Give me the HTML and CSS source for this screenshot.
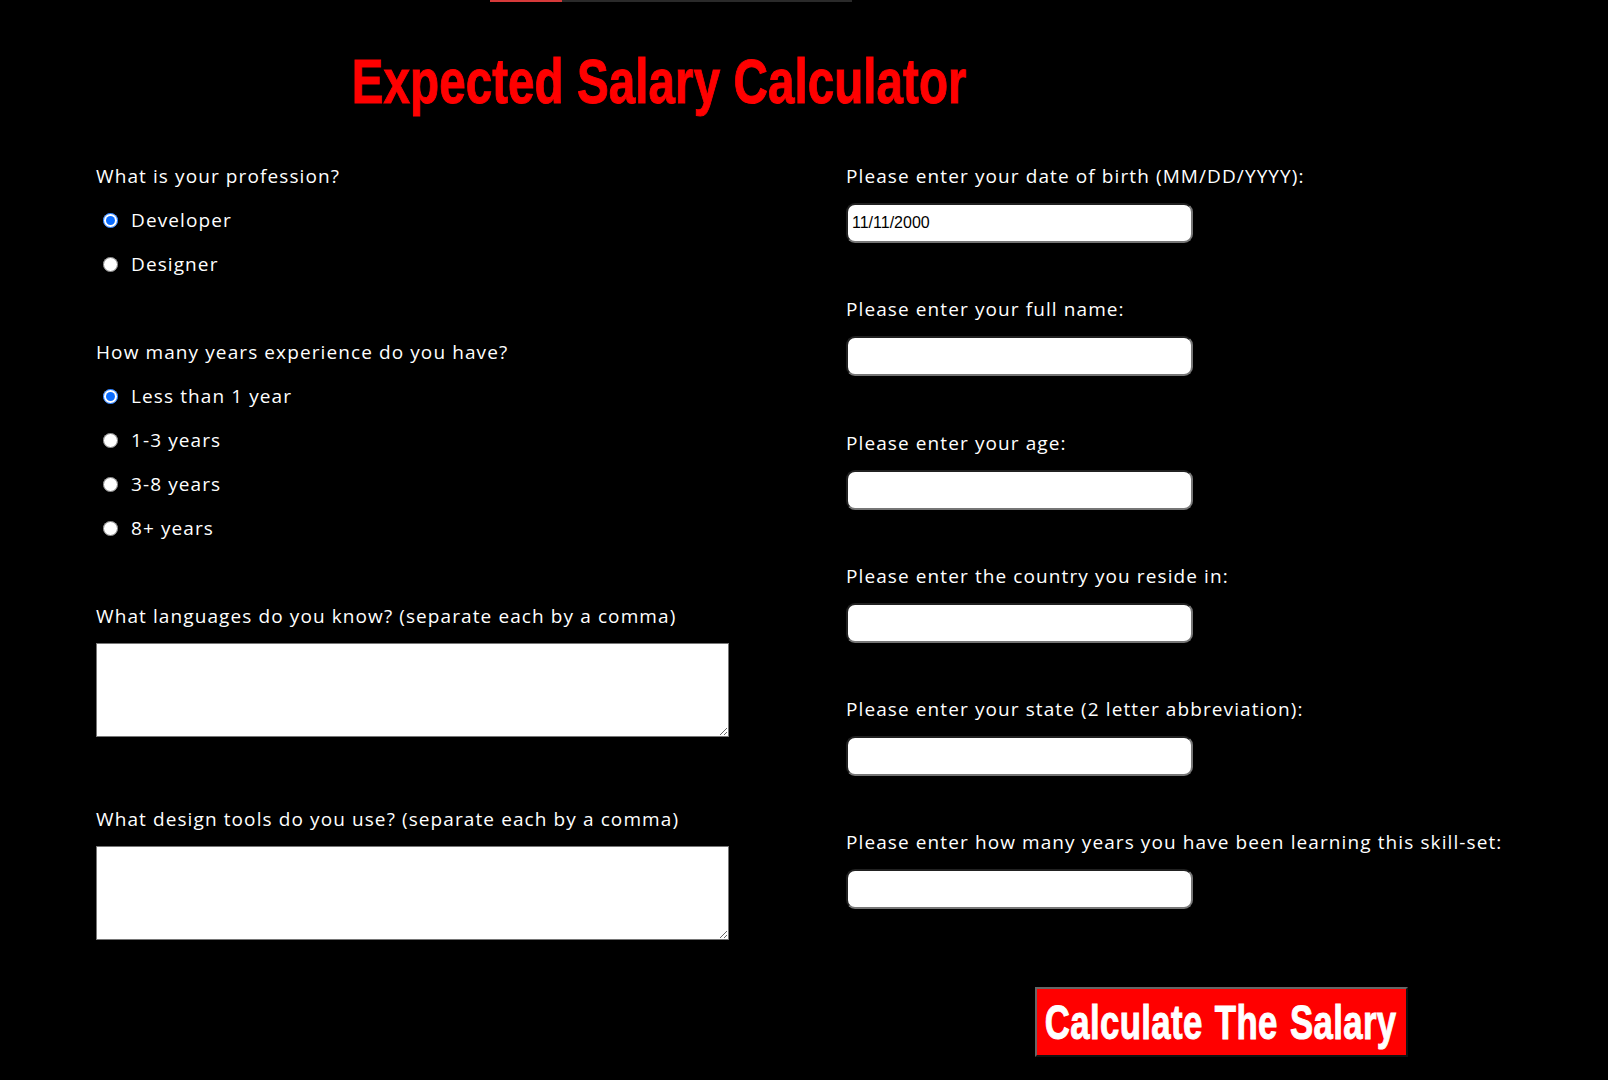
FILE: index.html
```html
<!DOCTYPE html>
<html lang="en">
<head>
<meta charset="utf-8">
<title>Expected Salary Calculator</title>
<link rel="stylesheet" href="styles.css">
</head>
<body>
<div class="progress"><div class="progress-fill"></div></div>
<header class="title-wrap">
  <h1 class="title"><span class="title-text">Expected Salary Calculator</span></h1>
</header>
<form class="form">
  <div class="col col-left">
    <div class="group radio-group">
      <span class="q">What is your profession?</span>
      <label class="opt"><input type="radio" name="prof" checked><span>Developer</span></label>
      <label class="opt"><input type="radio" name="prof"><span>Designer</span></label>
    </div>
    <div class="group radio-group">
      <span class="q">How many years experience do you have?</span>
      <label class="opt"><input type="radio" name="exp" checked><span>Less than 1 year</span></label>
      <label class="opt"><input type="radio" name="exp"><span>1-3 years</span></label>
      <label class="opt"><input type="radio" name="exp"><span>3-8 years</span></label>
      <label class="opt"><input type="radio" name="exp"><span>8+ years</span></label>
    </div>
    <div class="group text-group">
      <span class="q">What languages do you know? (separate each by a comma)</span>
      <textarea class="area"></textarea>
    </div>
    <div class="group text-group">
      <span class="q">What design tools do you use? (separate each by a comma)</span>
      <textarea class="area"></textarea>
    </div>
  </div>
  <div class="col col-right">
    <div class="field">
      <span class="q">Please enter your date of birth (MM/DD/YYYY):</span>
      <input class="box" type="text" value="11/11/2000">
    </div>
    <div class="field">
      <span class="q">Please enter your full name:</span>
      <input class="box" type="text">
    </div>
    <div class="field">
      <span class="q">Please enter your age:</span>
      <input class="box" type="text">
    </div>
    <div class="field">
      <span class="q">Please enter the country you reside in:</span>
      <input class="box" type="text">
    </div>
    <div class="field">
      <span class="q">Please enter your state (2 letter abbreviation):</span>
      <input class="box" type="text">
    </div>
    <div class="field">
      <span class="q">Please enter how many years you have been learning this skill-set:</span>
      <input class="box" type="text">
    </div>
    <button type="button" class="calc"><span class="calc-text">Calculate The Salary</span></button>
  </div>
</form>
</body>
</html>
```

FILE: styles.css
```css
html, body {
  margin: 0;
  padding: 0;
  background: #000;
}
body {
  color: #fff;
  font-family: "Open Sans", "DejaVu Sans", sans-serif;
  font-size: 19px;
  letter-spacing: 1.1px;
  min-height: 1080px;
}
.progress {
  width: 362px;
  height: 2px;
  margin-left: 490px;
  background: #2a2a2a;
}
.progress-fill {
  width: 72px;
  height: 2px;
  background: #d63a3a;
}
.title-wrap {
  width: 1126px;
  margin-left: 96px;
  display: flex;
  justify-content: center;
}
.title {
  margin: 0;
  padding-top: 43px;
  height: 122px;
  box-sizing: border-box;
  font-family: "Liberation Sans", Arial, sans-serif;
  font-weight: 700;
  font-size: 63px;
  line-height: 72px;
  letter-spacing: 0;
  color: #ff0000;
  white-space: nowrap;
  display: flex;
  justify-content: center;
}
.title-text {
  display: inline-block;
  transform: scaleX(0.757);
  -webkit-text-stroke: 1px #ff0000;
}
.form {
  display: grid;
  grid-template-columns: 750px 750px;
  padding-left: 96px;
  padding-top: 40px;
}
.col {
  display: flex;
  flex-direction: column;
}
.q {
  display: block;
  line-height: 24px;
  white-space: nowrap;
}
.radio-group {
  display: flex;
  flex-direction: column;
  gap: 20px;
  margin-bottom: 64px;
}
.opt {
  display: flex;
  align-items: center;
  line-height: 24px;
  height: 24px;
}
.opt input {
  width: 15px;
  height: 15px;
  margin: 0 13px 0 7px;
  accent-color: #0a6cff;
}
.text-group {
  display: flex;
  flex-direction: column;
  gap: 15px;
  margin-bottom: 70px;
}
.area {
  width: 633px;
  height: 94px;
  box-sizing: border-box;
  margin: 0;
  border: 1px solid #767676;
  background: #fff;
}
.field {
  display: flex;
  flex-direction: column;
  gap: 15px;
  margin-bottom: 54.3px;
}
.box {
  width: 347px;
  height: 40px;
  box-sizing: border-box;
  margin: 0;
  padding: 0 4px;
  border: 2px inset #767676;
  border-radius: 9px;
  background: #fff;
  font-family: "Liberation Sans", Arial, sans-serif;
  font-size: 16px;
  letter-spacing: 0;
  color: #000;
}
.calc {
  align-self: center;
  margin-top: 23px;
  width: 373px;
  height: 70px;
  box-sizing: border-box;
  padding: 0;
  border: 2px outset #666;
  background: #ff0000;
  color: #fff;
  font-family: "Liberation Sans", Arial, sans-serif;
  font-weight: 700;
  font-size: 49px;
  line-height: 66px;
  letter-spacing: 0.5px;
  word-spacing: 3px;
  white-space: nowrap;
  display: flex;
  justify-content: center;
  align-items: center;
  overflow: visible;
}
.calc-text {
  display: inline-block;
  transform: scaleX(0.71);
  -webkit-text-stroke: 1px #fff;
}
```
